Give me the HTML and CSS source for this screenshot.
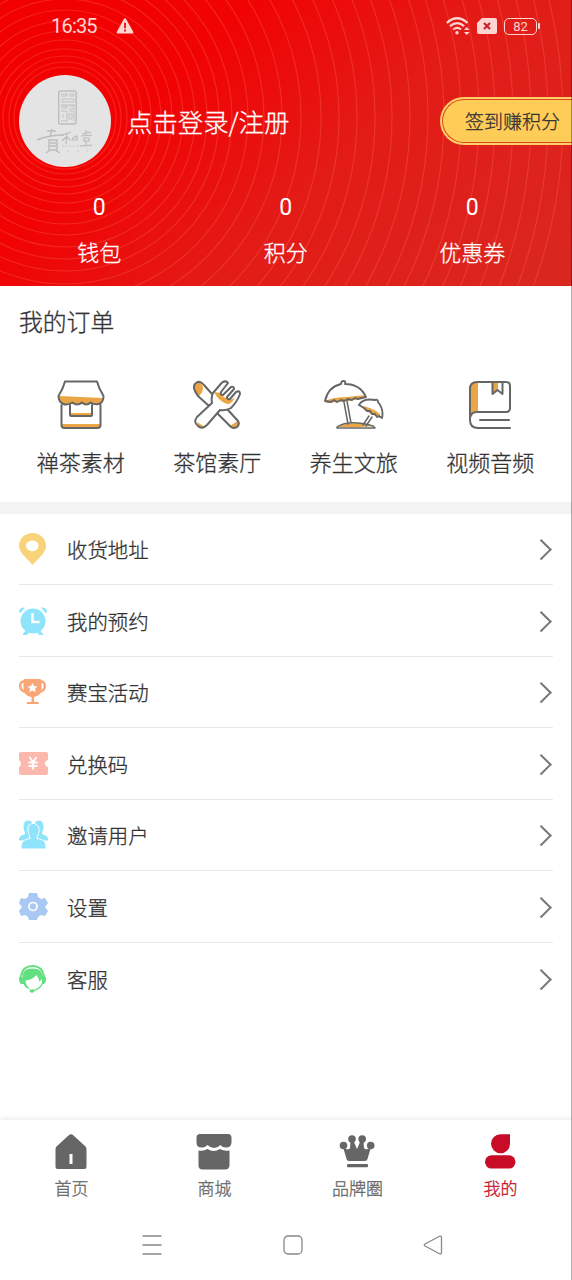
FILE: index.html
```html
<!DOCTYPE html>
<html lang="zh-CN">
<head>
<meta charset="utf-8">
<title>我的</title>
<link rel="stylesheet" href="styles.css">
</head>
<body>
<div class="screen">
  <header class="hero">
    <svg class="rings" viewBox="0 0 572 286" fill="none" stroke="#ff705a" stroke-opacity=".3" stroke-width="1.2">
      <circle cx="65" cy="118" r="51"/><circle cx="65" cy="118" r="56"/><circle cx="65" cy="118" r="62"/><circle cx="65" cy="118" r="69"/><circle cx="65" cy="117" r="77"/><circle cx="65" cy="117" r="86"/><circle cx="65" cy="117" r="96"/><circle cx="65" cy="117" r="107"/><circle cx="65" cy="117" r="118"/><circle cx="65" cy="117" r="130"/><circle cx="65" cy="117" r="142"/><circle cx="65" cy="117" r="154"/><circle cx="65" cy="117" r="167"/><circle cx="65" cy="117" r="183"/><circle cx="65" cy="117" r="199"/><circle cx="65" cy="117" r="217"/><circle cx="65" cy="117" r="236"/><circle cx="65" cy="117" r="256"/><circle cx="65" cy="117" r="274"/><circle cx="65" cy="117" r="292"/><circle cx="65" cy="117" r="310"/><circle cx="65" cy="117" r="327"/><circle cx="65" cy="117" r="345"/><circle cx="65" cy="117" r="363"/><circle cx="65" cy="117" r="379"/><circle cx="65" cy="117" r="396"/><circle cx="65" cy="117" r="414"/><circle cx="65" cy="117" r="430"/><circle cx="65" cy="117" r="448"/><circle cx="65" cy="117" r="466"/><circle cx="65" cy="117" r="483"/><circle cx="65" cy="117" r="498"/>
    </svg>
    <div class="status">
      <span class="time">16:35</span>
      <svg class="warn" width="18" height="16" viewBox="0 0 18 16"><path d="M8 .8Q9-.4 10 .8L17.300 14Q17.700 15.500 16.300 15.500H1.700Q.3 15.500.7 14Z" fill="#ffd5d2"/><path d="M9 4.800v5.400M9 11.600v2" stroke="#e60d0b" stroke-width="1.800"/></svg>
      <div class="signals">
        <svg width="24" height="18" viewBox="0 0 24 18" fill="none" stroke="#ffd5d2" stroke-width="2.200"><path d="M.8 6Q11-3.500 21.500 6M4 9.200q7-6 14.200 0M7.200 12.500q4-3.200 7.800 0"/><circle cx="11" cy="15.800" r="1.700" fill="#ffd5d2" stroke="none"/><path d="m18 13 2.800-3 2.700 3zm0 2 2.800 3 2.700-3z" fill="#ffd5d2" stroke="none"/></svg>
        <svg width="20" height="16" viewBox="0 0 20 16"><path d="M5 0h13q2 0 2 2v12q0 2-2 2H2q-2 0-2-2V5z" fill="#ffd5d2"/><path d="m7 5 6 6m0-6-6 6" stroke="#c8232b" stroke-width="2.200"/></svg>
        <div class="battery">82</div>
      </div>
    </div>
    <div class="profile">
      <svg class="avatar" width="92" height="92" viewBox="0 0 92 92">
        <circle cx="46" cy="46" r="46" fill="#e4e4e4"/>
        <g fill="none" stroke="#bcbcbc">
          <rect x="39.700" y="16" width="17.500" height="33" rx="2" stroke-width="1.400"/>
          <path d="M42 19h6v2h-6m8-2h5v2h-5m-7 3h12v3H43zm-1 6h14M42 31h6v2h-6m8-2h5v3h-5m-8 2h6v10h-6m8-10h5v10m-5-7h3v5h-3zM44 39v4" stroke-width=".9"/>
          <path d="M28 56h9M33 54l-2 8M18 65q12-5 27-5M30 65h8v10h-8zm1 3h6m-6 3h6M31 75l-4 3m9-3 5 3" stroke-width="1.400"/>
          <path d="M43 60l9-3m-4 1-1 11m0-7-4 4m5-4 3 3m3-2 4-2v4h-5zM63 59l9-2m-5-2v5m-5 1 11-1M65 63h5v3h-5zm2 3v4m-6 1 12-1" stroke-width="1.200"/>
          <path d="M43 71h29M48 76h3m7 0h3m6 0h3" stroke-width="1.500" stroke-dasharray="2 1" opacity=".4"/>
        </g>
      </svg>
      <span class="login">点击登录/注册</span>
      <div class="checkin"><span>签到赚积分</span></div>
    </div>
    <div class="stats">
      <div class="stat"><b>0</b><span>钱包</span></div>
      <div class="stat"><b>0</b><span>积分</span></div>
      <div class="stat"><b>0</b><span>优惠券</span></div>
    </div>
  </header>

  <section class="orders">
    <h2>我的订单</h2>
    <div class="grid">
      <div class="cell">
        <svg width="48" height="50" viewBox="0 0 48 50" fill="none" stroke="#666" stroke-width="2" stroke-linejoin="round" stroke-linecap="round"><path d="M2 16l44 2q-2 7-7 6-4 1-5-1-5 4-9 0-5 4-9 0-3 3-8 1-6-1-6-8zM5 44h38v4H5zM14 33h20v3H14z" fill="#eba544" stroke="none"/><path d="M8 1.500h32Q42 9 46.500 16q0 7-5 8-4 1-8-1.500-4 4-8.500 0-5 4-9.500 0-5 3-9 1.500-5-2-5-8Q6 9 8 1.500zM4.500 25v20q0 3 3 3h33q3 0 3-3V25M13 25v10q0 1 1 1h20q1 0 1-1V25"/></svg>
        <span>禅茶素材</span>
      </div>
      <div class="cell">
        <svg width="48" height="50" viewBox="0 0 48 50" fill="none" stroke="#666" stroke-width="2" stroke-linejoin="round" stroke-linecap="round"><path d="M2 4q6-3 8 3 0 6-4 9-5-5-4-12zM21 12l7 1 1 3 4 2 4 2 5-2q-4 6-7 6-9-2-14-12zM4 42l8 5q-6 2-8-5zM37 46l9-6q0 7-6 8z" fill="#eba544" stroke="none"/><path d="M16 26 5 16Q-2 6 3 3q4-3 8 2l8 9M35 30l10 11q2 3-1 6-3 2-6 0L25 34M19 23q-1-6 1-10l9-10.500q4-2.500 6 .5l-7 9q-1 3 2 3l8-8q3-1 3 2l-7 8q0 3 3 2l6-7q4-2 4 2-3 8-9 14-5 3-11 2L14 45q-5 5-9 1-5-4-1-9l15-14"/></svg>
        <span>茶馆素厅</span>
      </div>
      <div class="cell">
        <svg width="60" height="50" viewBox="0 0 60 50" fill="none" stroke="#666" stroke-width="1.900" stroke-linejoin="round" stroke-linecap="round"><path d="M1 21Q10 17 23 17l19-2-1 3-17 3-21 2zM36 26q10 0 20 8v4l-9-4zM14 47q12-7 36-1l-15 1z" fill="#eba544" stroke="none"/><path d="M1 21Q4 7 17 4q0-3 2.500-3Q22 1 21 4q15 0 21 13l-4 1-4 1-3-1-3 2-4-1-4 2-3-1-4 2-3-2-3 2zM35 25q4-7 16-5 3-1 3 2 6 7 4 16l-3-2-2 1-2-3-3 0-2-3-3 0-3-3z"/><path d="M20 22l4 22m3-1-4-22M45 36l-6 9m3 1 6-9M13 47q12-8 36-1l2 2H13z" stroke-width="1.500"/></svg>
        <span>养生文旅</span>
      </div>
      <div class="cell">
        <svg width="42" height="50" viewBox="0 0 42 50" fill="none" stroke="#666" stroke-width="2" stroke-linejoin="round" stroke-linecap="round"><path d="M2 8q0-6 6-6h1v30q-5 0-7 4zM23 2h6v8l-5 3z" fill="#eba544" stroke="none"/><path d="M41 48H9Q1 48 1 40V9q0-7 7-7h29q4 0 4 4v22q0 4-4 4H8q-6 0-7 6M11 40h29M23.500 2v12l5-4 5 4V2"/></svg>
        <span>视频音频</span>
      </div>
    </div>
  </section>

  <main class="menu">
    <div class="row"><svg class="ico" viewBox="0 0 30 32"><path d="M13.500 0C21 0 27 5.500 27 13c0 7-8.500 13-13.500 19C9 26 0 20 0 13 0 5.500 6 0 13.500 0zm0 7.500c-3.500 0-6.500 2.300-6.500 5.300s3 5.500 6.500 5.500 6-2.500 6-5.500-2.500-5.300-6-5.300z" fill="#f9d37a"/></svg><span>收货地址</span><i class="chev"></i></div>
    <div class="row"><svg class="ico" viewBox="0 0 30 32"><path d="M0 7q0-5 6-4.500L1.500 8Zm28 0q0-5-6-4.500L26.500 8ZM4 29l3-4 3 2-2 3H4zm20 0-3-4-3 2 2 3h4z" fill="#8fe4fb"/><circle cx="14" cy="16" r="12.500" fill="#8fe4fb"/><path d="M13.500 8v9h7" fill="none" stroke="#fff" stroke-width="2.500"/></svg><span>我的预约</span><i class="chev"></i></div>
    <div class="row"><svg class="ico" viewBox="0 0 30 32"><path d="M6 5.500Q1.200 5 1.200 10T7 16M21 5.500q4.800-.5 4.800 4.500T20 16" fill="none" stroke="#f9a575" stroke-width="2.400"/><path d="M6 3h15q1.500 0 1.500 2v7q0 8-7.500 9v5h3.500q1.500 0 1.500 2H7.500q0-2 1.500-2h3.500v-5Q4.500 20 4.500 12V5Q4.500 3 6 3z" fill="#f9a575"/><path d="m13.500 7 1.500 3 3.500.5-2.500 2.300.6 3.500-3.100-1.700-3.100 1.700.6-3.500-2.500-2.300L12 10z" fill="#fff"/></svg><span>赛宝活动</span><i class="chev"></i></div>
    <div class="row"><svg class="ico" viewBox="0 0 30 32"><path d="M2 4h25q2 0 2 2v6q-3 1-3 3.500t3 3.500v6q0 2-2 2H2q-2 0-2-2v-6q2-1 2-3.500T0 12V6q0-2 2-2z" fill="#fdb8ae"/><path d="m10.500 9 3.500 5 3.500-5M14 14v7.500M9.500 14.500h9M9.500 18h9" fill="none" stroke="#fff" stroke-width="1.800"/></svg><span>兑换码</span><i class="chev"></i></div>
    <div class="row"><svg class="ico" viewBox="0 0 30 32"><path d="M9 1.500q5 0 5 6l-4 11-1 3H0q-.5-5 5.500-6 1-2-.5-4-2-9.500 4-10zM20 1.500q6 .5 4 10-1.500 2-.5 4 6 1 5.500 6h-9l-2-3-3-11q0-6 5-6z" fill="#8fe4fb"/><path d="M14 4.500c4.500 0 6.500 3.500 6 8-.4 3-2 4.500-2 7 6.500 1 9.500 3 9 10.500H2c0-7.500 2.500-9.500 9-10.500 0-2.500-1.600-4-2-7-.5-4.500.5-8 5-8z" fill="#8fe4fb" stroke="#fff" stroke-width="1"/></svg><span>邀请用户</span><i class="chev"></i></div>
    <div class="row"><svg class="ico" viewBox="0 0 30 32"><path d="M10 2h8l1 4 3 2 4-1 3 5-3 4 3 4-3 5-4-1-3 2-1 3h-8l-1-3-3-2-4 1-2-5 3-4-3-4 2-5 4 1 3-2z" fill="#a9c8f3"/><circle cx="14" cy="15.500" r="4" fill="none" stroke="#fff" stroke-width="1.700"/></svg><span>设置</span><i class="chev"></i></div>
    <div class="row"><svg class="ico" viewBox="0 0 30 32"><path d="M2 13Q4 3 13.500 3T25 13" fill="none" stroke="#62df80" stroke-width="2"/><path d="M3.500 15Q3 5.500 13.500 5.500T23.500 15l-3 4q-.5-4-3-7Q13 17 6.500 17.500q0 5 5 9Q6 25 4.500 21H2q-2-1-2-4.500T2 12.500zM23 12.500h2q2 .5 2 4T25 21h-2z" fill="#62df80"/><path d="M23.500 20q-2 6-9 7.500" fill="none" stroke="#62df80" stroke-width="1.200"/><ellipse cx="13" cy="28" rx="2.500" ry="1.700" fill="#62df80"/></svg><span>客服</span><i class="chev"></i></div>
  </main>

  <nav class="tabs">
    <div class="tab"><svg width="36" height="36" viewBox="0 0 36 36"><path d="M15.500 1.500Q18-1 20.500 1.500L32 12q1.500 1 1.500 3v18q0 2-2 2h-27q-2 0-2-2V15q0-2 1.500-3z" fill="#666"/><path d="M16.500 20h3v10h-3z" fill="#fff"/></svg><span>首页</span></div>
    <div class="tab"><svg width="36" height="36" viewBox="0 0 36 36" fill="#666"><path d="M4 0h28q3.500 0 3.500 4v5q-1 5-6 4.500-3 0-5-2.500-3 3-6.500 3t-6.500-3q-3 3-6 2.500-5 0-5-5V4Q.5 0 4 0z"/><path d="M2.500 16.500q5 1 9-1.500 6 4 12.500 0 4 2.500 9.500 1.500V32q-1 3.500-4 3.500H6.500Q3 35.500 2.500 32z"/></svg><span>商城</span></div>
    <div class="tab"><svg width="36" height="36" viewBox="0 0 36 36" fill="#666"><circle cx="4.500" cy="11.500" r="3.800"/><circle cx="13" cy="5" r="3.800"/><circle cx="23.200" cy="5" r="3.800"/><circle cx="31.700" cy="11.500" r="3.800"/><path d="M4 13l3 2q3 1 4-1l.5-6h3.500l3 7 3-7h3.500l.5 6q1 2 4 1l3-2-3.500 12q-.5 2-2.500 2H10q-2 0-2.500-2z"/><rect x="8" y="30" width="21" height="3.300" rx="1"/></svg><span>品牌圈</span></div>
    <div class="tab active"><svg width="36" height="36" viewBox="0 0 36 36" fill="#c80c28"><path d="M28 .3V9.700A9.500 9.500 0 1 1 18.500.3z"/><rect x="3" y="21.300" width="30.500" height="13.300" rx="6.500"/></svg><span>我的</span></div>
  </nav>
  <div class="system">
    <svg width="20" height="20" viewBox="0 0 20 20" fill="none" stroke="#888" stroke-width="1.500"><path d="M.5 1h19M.5 10h19M.5 19h19"/></svg>
    <svg width="20" height="20" viewBox="0 0 20 20" fill="none" stroke="#888" stroke-width="1.300"><rect x="1" y="1" width="18" height="18" rx="4"/></svg>
    <svg width="20" height="20" viewBox="0 0 20 20" fill="none" stroke="#888" stroke-width="1.300"><path d="M2 9 16.500 1.300Q18.500.8 18.500 2.500v15q0 1.700-2 1.200L2 11q-1.500-1 0-2z"/></svg>
  </div>
  <div class="edge"></div>
</div>
</body>
</html>
```
FILE: styles.css
```css
* { box-sizing: border-box; }
body { margin: 0; background: #fff; font-family: "Noto Sans CJK SC", sans-serif; font-weight: 300; color: #333; -webkit-text-stroke: .3px currentColor; }
.screen { position: relative; width: 572px; height: 1280px; display: flex; flex-direction: column; overflow: hidden; }
.edge { position: absolute; top: 0; right: 0; width: 1px; height: 1280px; background: rgba(0, 0, 0, .32); }

.hero { position: relative; height: 286px; flex: none; color: #fff; background: linear-gradient(135deg, #f20000 0%, #f10304 30%, #e31b17 58%, #d9281f 100%); }
.rings { position: absolute; inset: 0; width: 572px; height: 286px; }
.status { position: relative; height: 52px; padding: 0 33px 0 51px; display: flex; align-items: center; color: #ffd5d2; -webkit-text-stroke: 0; }
.time { font-family: Roboto, sans-serif; font-weight: 400; font-size: 20px; letter-spacing: -.8px; line-height: 24px; width: 65px; }
.signals { margin-left: auto; display: flex; align-items: center; gap: 6.500px; }
.battery { position: relative; width: 33px; height: 17px; margin: 0 2px 0 1px; border: 1.500px solid #ffd5d2; border-radius: 5px; font: 13px/15px Roboto, sans-serif; text-align: center; }
.battery::after { content: ""; position: absolute; right: -4px; top: 4px; width: 2px; height: 6px; background: #ffd5d2; border-radius: 1px; }
.profile { position: relative; height: 92px; margin-top: 23px; padding-left: 19px; display: flex; align-items: center; }
.login { margin-left: 16px; font-size: 25.400px; line-height: 36px; }
.checkin { margin-left: auto; width: 132px; height: 48px; padding: 2px 0 2px 2px; background: #ffd06a; border-radius: 24px 0 0 24px; }
.checkin span { display: block; height: 44px; padding-left: 22px; border: 1px solid #d8491e; border-right: 0; border-radius: 22px 0 0 22px; background: #ffcc57; color: #333; font-size: 19px; line-height: 42px; white-space: nowrap; }
.stats { position: relative; display: grid; grid-template-columns: repeat(3, 186.500px); padding-left: 6px; margin-top: 25px; }
.stat { display: flex; flex-direction: column; align-items: center; font-size: 22px; line-height: 32px; }
.stat b { font-family: Roboto, sans-serif; font-weight: 400; font-size: 23px; margin-bottom: 11px; -webkit-text-stroke: 0; }

.orders { height: 227.500px; flex: none; border-bottom: 12px solid #f3f3f3; }
.orders h2 { margin: 0; padding: 18px 0 0 19px; font-size: 23.800px; font-weight: 300; line-height: 34px; }
.grid { display: grid; grid-template-columns: repeat(4, 136.500px); padding-left: 12.500px; margin-top: 41.500px; }
.cell { display: flex; flex-direction: column; align-items: center; font-size: 22px; line-height: 32px; gap: 15.500px; }

.menu { height: 606.500px; flex: none; padding: 0 19px; }
.row { height: 71.500px; padding-top: 1px; display: flex; align-items: center; font-size: 20.400px; line-height: 30px; border-bottom: 1.500px solid #e9e9e9; }
.row:last-child { border-bottom: 0; }
.ico { width: 30px; height: 32px; margin-right: 18px; }
.chev { width: 14.500px; height: 14.500px; margin: 0 5px 0 auto; border: solid #666; border-width: 2px 2px 0 0; border-color: #777; transform: rotate(45deg); }

.tabs { height: 91px; flex: none; display: grid; grid-template-columns: repeat(4, 143px); padding-top: 14px; box-shadow: 0 -2px 4px rgba(0, 0, 0, .07); }
.tab { display: flex; flex-direction: column; align-items: center; gap: 5px; font-size: 17px; line-height: 25px; color: #666; }
.tab svg { margin-right: 1px; }
.tab.active { color: #c80c28; }
.system { height: 67px; flex: none; display: flex; justify-content: space-between; align-items: center; padding: 0 129px 0 142px; }
```
